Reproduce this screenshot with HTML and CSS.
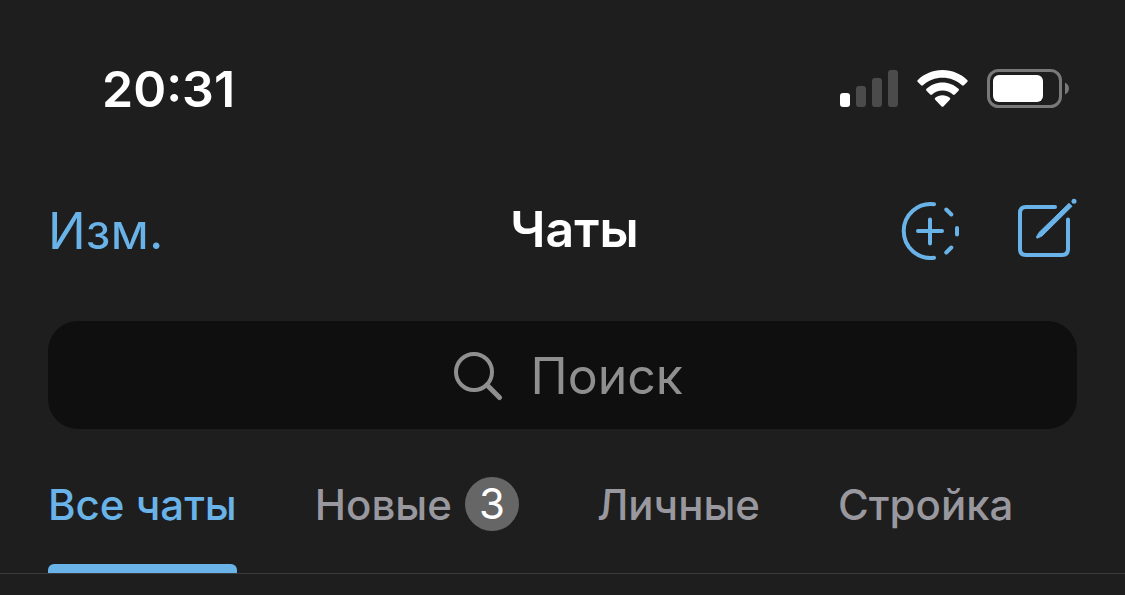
FILE: index.html
```html
<!DOCTYPE html>
<html lang="ru">
<head>
<meta charset="utf-8">
<meta name="viewport" content="width=device-width, initial-scale=1">
<title>Чаты</title>
<link rel="stylesheet" href="styles.css">
</head>
<body>
<div class="status-bar">
  <time class="clock">20:31</time>
  <div class="indicators">
    <svg width="58" height="38" viewBox="0 0 58 38" aria-hidden="true">
      <rect x="0" y="23" width="10" height="14" rx="3" fill="#fff"/>
      <g fill="#4b4b4b">
        <rect x="16" y="16" width="10" height="21" rx="3"/>
        <rect x="32" y="8" width="10" height="29" rx="3"/>
        <rect x="48" y="0" width="10" height="37" rx="3"/>
      </g>
    </svg>
    <svg width="51" height="38" viewBox="0 0 51 38" fill="#fff" aria-hidden="true">
      <path d="M25.500 0C35 0 44 3.800 50.200 10.100Q51.200 11.100 50.200 12.100L46.900 15.300Q46 16.200 45 15.300C39.700 10.400 32.900 7.800 25.500 7.800S11.300 10.400 6 15.300Q5 16.200 4.100 15.300L.8 12.100Q-.2 11.100.8 10.100C7 3.800 16 0 25.500 0Z"/>
      <path d="M25.500 12.500C31.700 12.500 37.300 14.800 41.500 18.800Q42.500 19.800 41.500 20.800L37.800 24.500Q36.900 25.400 35.900 24.500C33.100 22 29.500 20.500 25.500 20.500S17.900 22 15.100 24.500Q14.100 25.400 13.200 24.500L9.500 20.800Q8.500 19.800 9.500 18.800C13.700 14.800 19.300 12.500 25.500 12.500Z"/>
      <path d="M25.500 25.200C28.300 25.200 30.800 26.200 32.800 27.800Q33.800 28.700 32.800 29.700L26.400 36.400Q25.500 37.300 24.600 36.400L18.200 29.700Q17.200 28.700 18.200 27.800C20.200 26.200 22.700 25.200 25.500 25.200Z"/>
    </svg>
    <svg width="82" height="40" viewBox="0 0 82 40" aria-hidden="true">
      <rect x="1.500" y="1.500" width="72" height="36" rx="10" fill="none" stroke="#797979" stroke-width="3"/>
      <rect x="6" y="6" width="50" height="27" rx="6" fill="#fff"/>
      <path d="M78 13.500C83.300 16 83.300 23 78 25.500Z" fill="#797979"/>
    </svg>
  </div>
</div>

<header class="header">
  <button class="edit" type="button">Изм.</button>
  <h1 class="title">Чаты</h1>
  <div class="actions">
    <button class="icon-button" type="button" aria-label="Добавить историю">
      <svg width="60" height="60" viewBox="0 0 60 60" fill="none" stroke="#69b3e9" stroke-width="4" stroke-linecap="round" aria-hidden="true">
        <path d="M33 3.200A27 27 0 1 0 33 56.800M29 18.500V42.500M17 30H41M45.300 8.500L50.300 13.500M56 27V33.500M50.300 46.500L45.300 51.500"/>
      </svg>
    </button>
    <button class="icon-button" type="button" aria-label="Новое сообщение">
      <svg width="60" height="60" viewBox="0 0 60 60" aria-hidden="true">
        <path d="M38 6H9Q3 6 3 12V48Q3 54 9 54H45Q51 54 51 48V18.500" fill="none" stroke="#69b3e9" stroke-width="4" stroke-linecap="round"/>
        <path d="M52 2.300L55 5.300L25 35L20.500 37.100Q19.200 37.200 19.500 35.900L22 31.500Z" fill="#69b3e9" stroke="#69b3e9" stroke-linejoin="round"/>
        <circle cx="57" cy="0.300" r="2.500" fill="#69b3e9"/>
      </svg>
    </button>
  </div>
</header>

<label class="search">
  <svg width="50" height="50" viewBox="0 0 50 50" fill="none" stroke="#8f8f8f" stroke-width="4" stroke-linecap="round" aria-hidden="true">
    <circle cx="21" cy="21" r="18"/>
    <path d="M34 34L46.500 46.500" stroke-width="5"/>
  </svg>
  <input class="search-input" type="text" placeholder="Поиск" aria-label="Поиск">
</label>

<nav class="tabs" aria-label="Папки чатов">
  <button class="tab tab-active" type="button" aria-current="true">Все чаты</button>
  <button class="tab" type="button">Новые <span class="badge">3</span></button>
  <button class="tab" type="button">Личные</button>
  <button class="tab" type="button">Стройка</button>
</nav>
</body>
</html>
```
FILE: styles.css
```css
* {
  box-sizing: border-box;
}

body {
  margin: 0;
  background: #1e1e1e;
  color: #fff;
  font-family: Inter, "Liberation Sans", sans-serif;
}

button {
  padding: 0;
  border: 0;
  background: none;
  color: inherit;
  font: inherit;
}

.status-bar {
  display: flex;
  align-items: center;
  justify-content: space-between;
  padding: 57px 56px 0 102px;
  line-height: 64px;
}

.clock {
  font-size: 50px;
  font-weight: 600;
}

.indicators {
  display: flex;
  align-items: center;
  gap: 19px;
}

.header {
  display: grid;
  grid-template-columns: 1fr auto 1fr;
  align-items: center;
  padding: 78px 48px 0;
  line-height: 64px;
  font-size: 50px;
}

.edit {
  justify-self: start;
  color: #69b3e9;
}

.title {
  align-self: start;
  margin: 0 0 0 24px;
  font-size: 50px;
  font-weight: 600;
  line-height: 60px;
}

.actions {
  display: flex;
  justify-content: flex-end;
  gap: 56px;
}

.icon-button svg {
  display: block;
  overflow: visible;
}

.search {
  display: flex;
  align-items: center;
  justify-content: center;
  gap: 28px;
  height: 108px;
  margin: 58px 48px 0;
  padding: 2px 0 0 10px;
  border-radius: 30px;
  background: #0f0f0f;
}

.search-input {
  width: 152px;
  padding: 0;
  border: 0;
  outline: 0;
  background: none;
  color: #fff;
  font: 50px/64px Inter, "Liberation Sans", sans-serif;
}

.search-input::placeholder {
  color: #8f8f8f;
}

.tabs {
  display: flex;
  gap: 78px;
  padding: 0 48px;
  border-bottom: 1px solid #3c3c3e;
}

.tab {
  position: relative;
  display: flex;
  align-items: center;
  gap: 13px;
  height: 144px;
  padding-top: 6px;
  color: #98989e;
  font-size: 42px;
  font-weight: 500;
  white-space: nowrap;
}

.tab-active {
  color: #69b3e9;
}

.tab-active::after {
  content: "";
  position: absolute;
  right: 0;
  bottom: 0;
  left: 0;
  height: 9px;
  border-radius: 6px 6px 0 0;
  background: #69b3e9;
}

.badge {
  width: 54px;
  border-radius: 27px;
  background: #666;
  color: #fff;
  font-weight: 400;
  line-height: 54px;
  text-align: center;
}
```
